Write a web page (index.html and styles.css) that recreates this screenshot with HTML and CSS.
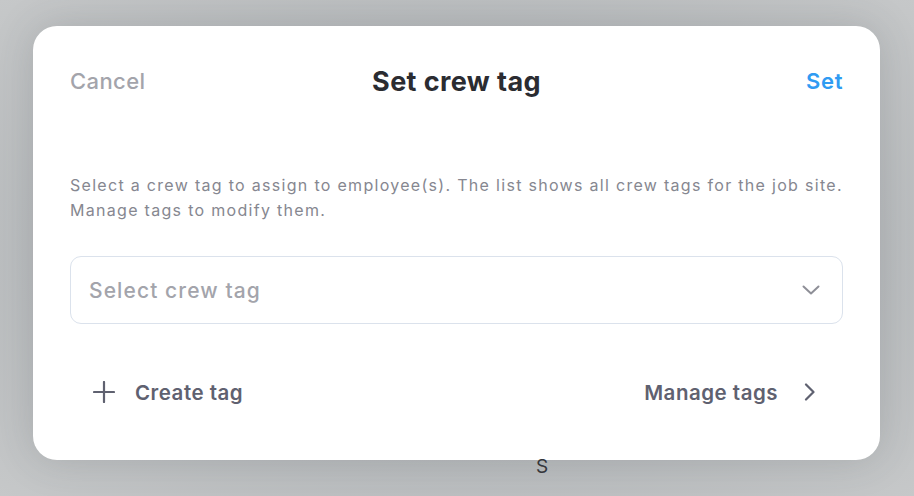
FILE: index.html
```html
<!DOCTYPE html>
<html>
<head>
<meta charset="utf-8">
<link rel="stylesheet" href="styles.css">
</head>
<body>
<div class="page">
  <div class="card">
    <div class="header">
      <span class="cancel">Cancel</span>
      <span class="title">Set crew tag</span>
      <span class="set">Set</span>
    </div>
    <p class="desc">Select a crew tag to assign to employee(s). The list shows all crew tags for the job site.<br>Manage tags to modify them.</p>
    <div class="select">
      <span class="placeholder">Select crew tag</span>
      <svg class="chev" width="18" height="10" viewBox="0 0 18 10"><path d="M1.5 1.5 L9 8.5 L16.5 1.5" fill="none" stroke="#8e8f97" stroke-width="2" stroke-linecap="round" stroke-linejoin="round"/></svg>
    </div>
    <div class="footer">
      <div class="action">
        <svg width="22" height="22" viewBox="0 0 22 22"><path d="M11 1 V21 M1 11 H21" stroke="#5f6170" stroke-width="2.2" stroke-linecap="round"/></svg>
        <span>Create tag</span>
      </div>
      <div class="action">
        <span>Manage tags</span>
        <svg width="12" height="18" viewBox="0 0 12 18"><path d="M2 1.5 L9.5 9 L2 16.5" fill="none" stroke="#5f6170" stroke-width="2.2" stroke-linecap="round" stroke-linejoin="round"/></svg>
      </div>
    </div>
  </div>
  <div class="under">S</div>
</div>
</body>
</html>
```
FILE: styles.css
```css
html, body {
  margin: 0;
  padding: 0;
}
body {
  width: 914px;
  height: 496px;
  overflow: hidden;
  background: radial-gradient(ellipse at center, #aeb2b5 0%, #b8bbbd 60%, #c6c8c9 100%);
  font-family: Inter, "Noto Sans", sans-serif;
}
.page {
  padding: 26px 0 0 33px;
}
.card {
  box-sizing: border-box;
  width: 847px;
  height: 434px;
  background: #fff;
  border-radius: 24px;
  box-shadow: 0 0 40px rgba(60, 66, 72, 0.18);
  padding: 36px 37px 0 37px;
}
.header {
  height: 38px;
  display: grid;
  grid-template-columns: 1fr auto 1fr;
  align-items: center;
}
.cancel {
  justify-self: start;
  font-size: 22px;
  font-weight: 500;
  color: #a3a4ab;
  letter-spacing: 0.4px;
}
.title {
  font-size: 27px;
  font-weight: 700;
  color: #2b2c31;
  letter-spacing: 0.4px;
}
.set {
  justify-self: end;
  font-size: 22px;
  font-weight: 600;
  color: #2f9bf2;
  letter-spacing: 0.6px;
}
.desc {
  margin: 73px 0 0 0;
  font-size: 16px;
  line-height: 25px;
  color: #868790;
  letter-spacing: 1.3px;
  white-space: nowrap;
}
.select {
  margin-top: 33px;
  box-sizing: border-box;
  height: 68px;
  border: 1.5px solid #dbe2ec;
  border-radius: 11px;
  display: flex;
  align-items: center;
  justify-content: space-between;
  padding: 0 22px 0 18px;
}
.placeholder {
  font-size: 21px;
  font-weight: 500;
  color: #a3a4ab;
  letter-spacing: 1.1px;
}
.chev {
  display: block;
}
.footer {
  margin-top: 48px;
  height: 40px;
  display: flex;
  align-items: center;
  justify-content: space-between;
  padding: 0 27px 0 23px;
}
.action {
  display: flex;
  align-items: center;
  gap: 20px;
  font-size: 20.5px;
  font-weight: 600;
  color: #5f6170;
  letter-spacing: 0.5px;
}
.action:last-child {
  gap: 26px;
}
.action svg {
  display: block;
}
.under {
  margin: -8px 0 0 503px;
  font-size: 19px;
  color: #35363b;
  line-height: 30px;
}
```
